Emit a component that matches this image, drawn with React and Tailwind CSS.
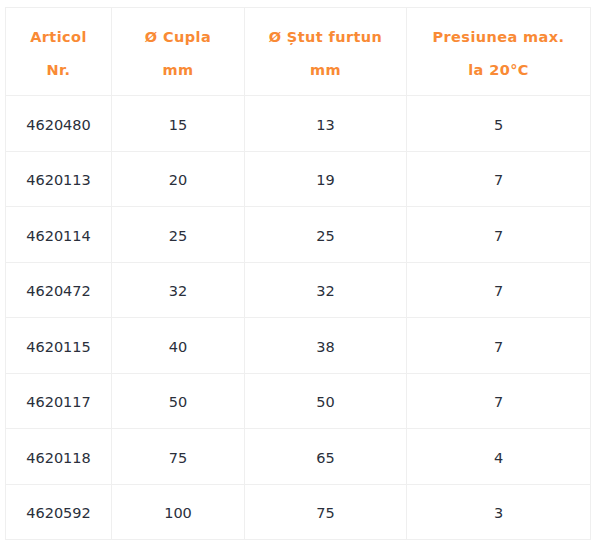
export default function App() {
  const rows = [
    ["4620480", "15", "13", "5"],
    ["4620113", "20", "19", "7"],
    ["4620114", "25", "25", "7"],
    ["4620472", "32", "32", "7"],
    ["4620115", "40", "38", "7"],
    ["4620117", "50", "50", "7"],
    ["4620118", "75", "65", "4"],
    ["4620592", "100", "75", "3"],
  ];
  const heads = [
    ["Articol", "Nr."],
    ["Ø Cupla", "mm"],
    ["Ø Ștut furtun", "mm"],
    ["Presiunea max.", "la 20°C"],
  ];
  const widths = ["w-[106px]", "w-[133px]", "w-[162px]", "w-[184px]"];
  return (
    <div className="w-[600px] h-[544px] bg-white pt-[7px] pl-[5px]" style={{ fontFamily: '"DejaVu Sans", sans-serif' }}>
      <table className="border-collapse text-[14.5px]">
        <thead>
          <tr className="h-[88px]">
            {heads.map((h, i) => (
              <th key={i} className={`${widths[i]} border border-[#efefef] text-center align-middle font-bold text-[#f98a35] leading-[33px] tracking-[0.4px] p-0 pt-[5px]`}>
                <div>{h[0]}</div>
                <div>{h[1]}</div>
              </th>
            ))}
          </tr>
        </thead>
        <tbody>
          {rows.map((r, ri) => (
            <tr key={ri} className="h-[55.5px]">
              {r.map((c, ci) => (
                <td key={ci} className="border border-[#efefef] text-center align-middle text-[#2a2f3b] p-0 pt-[5px]">
                  {c}
                </td>
              ))}
            </tr>
          ))}
        </tbody>
      </table>
    </div>
  );
}
